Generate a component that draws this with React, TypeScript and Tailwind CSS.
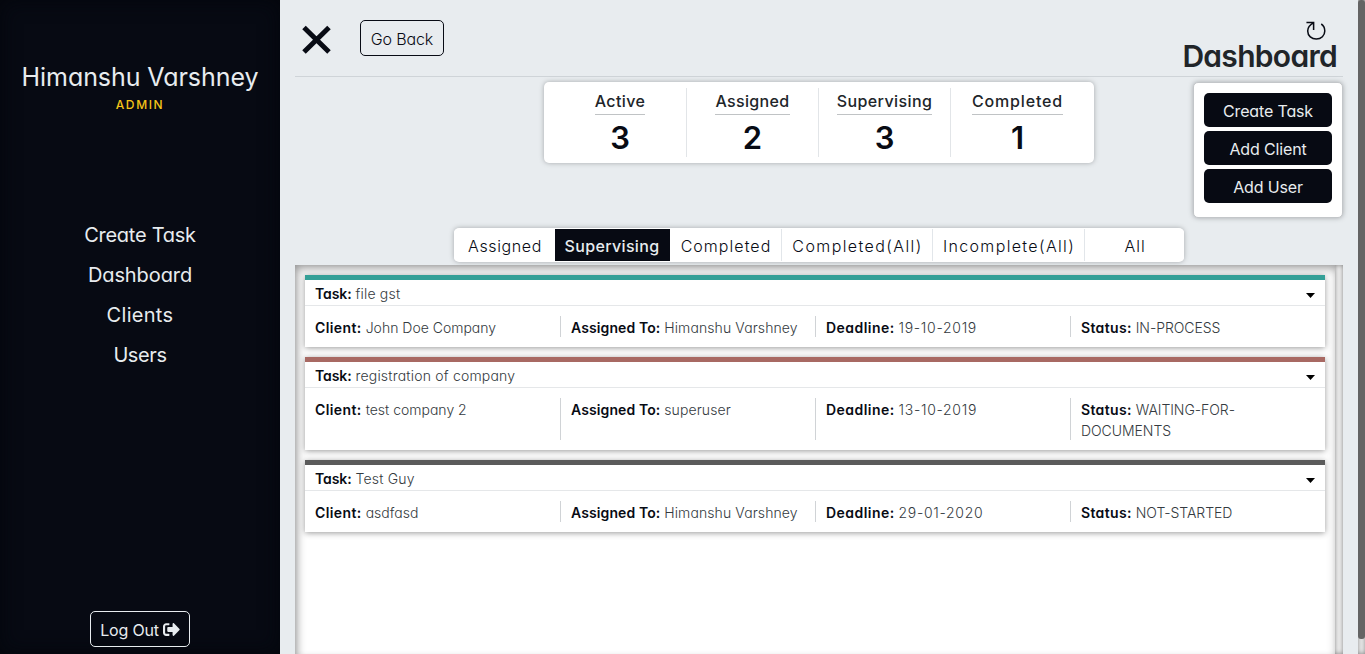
import React from "react";
import { FaSignOutAlt } from "react-icons/fa";

const nav = [
  { label: "Create Task", cls: "tracking-[-0.25px]" },
  { label: "Dashboard", cls: "tracking-[-0.1px]" },
  { label: "Clients", cls: "tracking-[0.3px]" },
  { label: "Users", cls: "tracking-[-0.4px]" },
];

const stats = [
  { label: "Active", value: 3, cls: "tracking-[0.4px]" },
  { label: "Assigned", value: 2, cls: "tracking-[0.35px]" },
  { label: "Supervising", value: 3, cls: "tracking-[0.4px]" },
  { label: "Completed", value: 1, cls: "tracking-[0.85px]" },
];

const tabs = [
  { label: "Assigned", cls: "w-[101px] pl-[2px] border-r-0 bg-white text-[#080b14] tracking-[0.6px]" },
  { label: "Supervising", cls: "w-[115px] border-r-0 bg-[#070a13] text-[#e8ecef] font-medium tracking-[0.35px]" },
  { label: "Completed", cls: "w-[112px] pl-[2px] border-r bg-white text-[#080b14] tracking-[1.05px]" },
  { label: "Completed(All)", cls: "w-[151px] pl-[2px] border-r bg-white text-[#080b14] tracking-[1.4px]" },
  { label: "Incomplete(All)", cls: "w-[152px] pl-[2px] border-r bg-white text-[#080b14] tracking-[1.35px]" },
  { label: "All", cls: "w-[99px] pl-[2px] border-r-0 bg-white text-[#080b14] tracking-[1px]" },
];

const tasks = [
  { bar: "bg-[#35a097]", name: "file gst", client: "John Doe Company", to: "Himanshu Varshney", deadline: "19-10-2019", status: "IN-PROCESS" },
  { bar: "bg-[#a86963]", name: "registration of company", client: "test company 2", to: "superuser", deadline: "13-10-2019", status: "WAITING-FOR-DOCUMENTS" },
  { bar: "bg-[#5b5b5b]", name: "Test Guy", client: "asdfasd", to: "Himanshu Varshney", deadline: "29-01-2020", status: "NOT-STARTED" },
];

const labelTracking: Record<string, string> = {
  Client: "tracking-[0.4px]",
  "Assigned To": "tracking-[0.1px]",
  Deadline: "tracking-[0.45px]",
  Status: "tracking-[0.35px]",
};

const valueTracking: Record<string, string> = {
  Client: "tracking-[0px]",
  "Assigned To": "tracking-[0.1px]",
  Deadline: "tracking-[0.7px]",
  Status: "tracking-[-0.05px]",
};

function Field({ label, value, last = false }: { label: string; value: string; last?: boolean }) {
  return (
    <div className={last ? "w-[254px] pl-[10px] pr-[10px]" : "w-[255px] shrink-0 border-r border-[#d0d3d6] px-[10px] first:w-[256px]"}>
      <div className="translate-y-px">
        <b className={`font-semibold text-[#080b14] ${labelTracking[label]}`}>{label}:</b>{" "}
        <span className={valueTracking[label]}>{value}</span>
      </div>
    </div>
  );
}

export default function App() {
  return (
    <div className="flex h-[654px] w-full overflow-hidden bg-[#e8ecef] font-['Inter','Liberation_Sans',sans-serif] text-[#080b14] [font-feature-settings:'cv11']">
      <aside className="flex w-[280px] shrink-0 flex-col items-center bg-[#070a13] text-[#e8ecef] shadow-[inset_0_0_20px_#04060c]">
        <h1 className="mt-[59px] text-[25px] leading-[36px] tracking-[-0.07px] whitespace-nowrap">Himanshu Varshney</h1>
        <div className="pt-px text-[12px] leading-[18px] font-medium tracking-[1.6px] text-[#f5c518]">ADMIN</div>
        <nav className="mt-[101px] flex flex-col items-center text-[20px] leading-[40px]">
          {nav.map((n) => (
            <a key={n.label} className={n.cls}>{n.label}</a>
          ))}
        </nav>
        <button className="mt-auto mb-[7px] flex h-[36px] w-[100px] items-center justify-center gap-[4px] rounded-[5px] border border-[#e8ecef] pt-[2px] text-[16px] tracking-[-0.2px] whitespace-nowrap">
          Log Out <FaSignOutAlt size={17} className="-mt-[2px]" />
        </button>
      </aside>

      <main className="flex min-w-0 grow flex-col pr-[15px] pl-[15px]">
        <header className="flex h-[77px] shrink-0 justify-between border-b border-[#cfd4d8]">
          <div className="flex pt-[20px]">
            <svg className="mt-[5px] ml-[6px] h-[30px] w-[30px]" viewBox="0 0 30 30">
              <path d="M3 2.500 28 27M28 2.500 3 27" stroke="#080b14" strokeWidth="5" fill="none" />
            </svg>
            <button className="ml-[29px] h-[36px] w-[84px] rounded-[5px] border border-[#080b14] pt-[2px] text-[16px] font-light tracking-[-0.15px]">Go Back</button>
          </div>
          <div className="flex flex-col items-end pt-[20px] pr-[6px]">
            <svg className="mr-[10px] h-[22px] w-[22px]" viewBox="0 0 22 22" fill="none" stroke="#080b14" strokeWidth="1.6">
              <path d="M1 2.700H8.500V10.500M8.500 3C5.500 4.500 2.300 7 2.300 11.500 2.300 16.500 6.500 20 11.300 20 16.500 20 20.200 16.300 20.200 11.500 20.200 8.500 18.500 5.500 16.500 4.200" />
            </svg>
            <h2 className="-mt-[5px] text-[30px] leading-[40px] font-semibold tracking-[-0.7px] text-[#212529]">Dashboard</h2>
          </div>
        </header>

        <div className="grid h-[151px] shrink-0 grid-cols-[249px_550px_99px_150px] pt-[5px]">
          <div />
          <section className="flex h-[81px] rounded-[5px] bg-white px-[10px] py-[6px] shadow-[0_0_5px_#a4a7aa]">
            {stats.map((s, i) => (
              <div key={s.label} className={i === 0 ? "flex w-[133px] flex-col items-center border-r border-[#e2e5e8]" : i < 3 ? "flex w-[132px] flex-col items-center border-r border-[#e2e5e8]" : "flex w-[133px] flex-col items-center"}>
                <div className={`border-b border-[#c0c3c5] pt-px pb-px text-[16px] leading-[24px] font-medium text-[#212529] ${s.cls}`}>{s.label}</div>
                <div className="mt-[1px] text-[31px] leading-[44px] font-semibold">{s.value}</div>
              </div>
            ))}
          </section>
          <div />
          <section className="flex h-[136px] flex-col gap-[4px] rounded-[5px] border border-[#c3c6c9] bg-white p-[10px] shadow-[0_0_5px_#a4a7aa]">
            {["Create Task", "Add Client", "Add User"].map((t) => (
              <button key={t} className="h-[34px] rounded-[5px] bg-[#070a13] pt-[2px] text-[16px] tracking-[-0.15px] text-[#e8ecef]">{t}</button>
            ))}
          </section>
        </div>

        <div className="relative -ml-px flex h-[34px] w-[730px] shrink-0 self-center rounded-[5px] bg-white py-px shadow-[0_0_5px_#a4a7aa]">
          {tabs.map((t) => (
            <button key={t.label} className={`shrink-0 border-[#e2e6ea] pt-[2px] text-[16px] font-light whitespace-nowrap first:rounded-l-[4px] last:rounded-r-[4px] ${t.cls}`}>
              {t.label}
            </button>
          ))}
        </div>

        <section className="mt-[3px] flex min-h-0 grow">
          <div className="flex w-[1040px] flex-col gap-[10px] bg-white p-[10px] shadow-[inset_0_10px_10px_-7px_#999,inset_9px_0_9px_-7px_#999,inset_-5px_0_8px_-5px_#ccc]">
            {tasks.map((t) => (
              <article key={t.name} className="bg-white text-[14px] leading-[21px] font-light text-[#343a40] shadow-[0_1px_6px_#999]">
                <div className={`h-[5px] ${t.bar}`} />
                <div className="flex h-[26px] items-center justify-between border-b border-[#e5e7e9] pt-[2px] pr-[10px] pl-[10px]">
                  <div><b className="font-semibold tracking-[-0.1px] text-[#080b14]">Task:</b> <span className="tracking-[0.2px]">{t.name}</span></div>
                  <svg className="mt-[3px] h-[5px] w-[9px]" viewBox="0 0 9 5"><path d="M0 0H9L4.500 5Z" fill="#000" /></svg>
                </div>
                <div className="flex py-[10px]">
                  <Field label="Client" value={t.client} />
                  <Field label="Assigned To" value={t.to} />
                  <Field label="Deadline" value={t.deadline} />
                  <Field label="Status" value={t.status} last />
                </div>
              </article>
            ))}
          </div>
          <div className="w-[8px] bg-[#f1f1f1] shadow-[inset_0_0_5px_#808080]" />
        </section>
      </main>

      <div className="w-[7px] shrink-0 bg-[#f1f1f1] shadow-[inset_0_0_5px_#808080]">
        <div className="h-[639px] rounded-[3px] bg-[#646464]" />
      </div>
    </div>
  );
}
